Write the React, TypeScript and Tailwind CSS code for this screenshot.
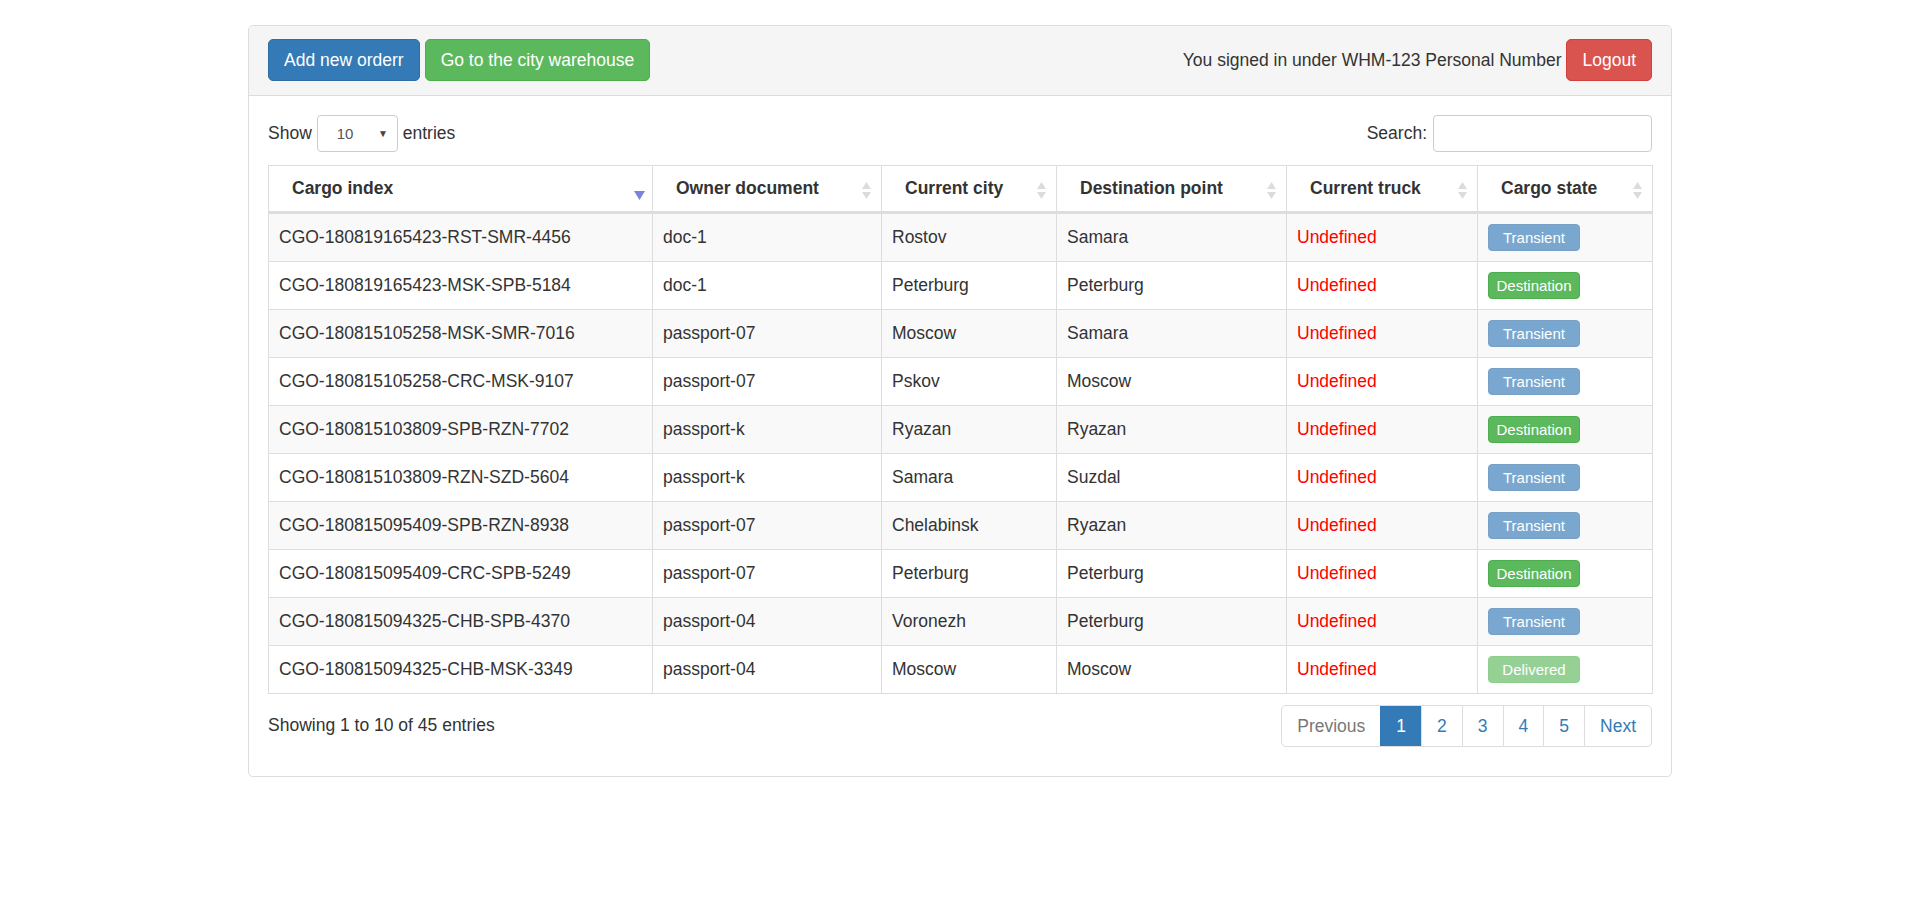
import React from "react";

type CargoState = "Transient" | "Destination" | "Delivered";

interface CargoRow {
  index: string;
  owner: string;
  city: string;
  destination: string;
  state: CargoState;
}

const rows: CargoRow[] = [
  { index: "CGO-180819165423-RST-SMR-4456", owner: "doc-1", city: "Rostov", destination: "Samara", state: "Transient" },
  { index: "CGO-180819165423-MSK-SPB-5184", owner: "doc-1", city: "Peterburg", destination: "Peterburg", state: "Destination" },
  { index: "CGO-180815105258-MSK-SMR-7016", owner: "passport-07", city: "Moscow", destination: "Samara", state: "Transient" },
  { index: "CGO-180815105258-CRC-MSK-9107", owner: "passport-07", city: "Pskov", destination: "Moscow", state: "Transient" },
  { index: "CGO-180815103809-SPB-RZN-7702", owner: "passport-k", city: "Ryazan", destination: "Ryazan", state: "Destination" },
  { index: "CGO-180815103809-RZN-SZD-5604", owner: "passport-k", city: "Samara", destination: "Suzdal", state: "Transient" },
  { index: "CGO-180815095409-SPB-RZN-8938", owner: "passport-07", city: "Chelabinsk", destination: "Ryazan", state: "Transient" },
  { index: "CGO-180815095409-CRC-SPB-5249", owner: "passport-07", city: "Peterburg", destination: "Peterburg", state: "Destination" },
  { index: "CGO-180815094325-CHB-SPB-4370", owner: "passport-04", city: "Voronezh", destination: "Peterburg", state: "Transient" },
  { index: "CGO-180815094325-CHB-MSK-3349", owner: "passport-04", city: "Moscow", destination: "Moscow", state: "Delivered" },
];

const columns = [
  { label: "Cargo index", width: "w-[384px]", sorted: true },
  { label: "Owner document", width: "w-[229px]", sorted: false },
  { label: "Current city", width: "w-[175px]", sorted: false },
  { label: "Destination point", width: "w-[230px]", sorted: false },
  { label: "Current truck", width: "w-[191px]", sorted: false },
  { label: "Cargo state", width: "w-[175px]", sorted: false },
];

const stateClass: Record<CargoState, string> = {
  Transient: "bg-[#7aa7d0] border-[#77a0c4]",
  Destination: "bg-[#5cb85c] border-[#4cae4c]",
  Delivered: "bg-[#95d195] border-[#8ecd8e]",
};

function SortBoth() {
  return (
    <svg width="9" height="19" viewBox="0 0 9 19" className="absolute right-[10px] top-[15px]">
      <polygon points="0,8 4.5,1 9,8" fill="#dcdcdc" />
      <polygon points="0,11 4.5,18 9,11" fill="#dcdcdc" />
    </svg>
  );
}

function SortDesc() {
  return (
    <svg width="11" height="9" viewBox="0 0 11 9" className="absolute right-[7px] top-[25px]">
      <polygon points="0,0 11,0 5.5,9" fill="#7b83da" />
    </svg>
  );
}

export default function App() {
  return (
    <div className="min-h-screen bg-white pt-[25px] text-[17.5px] leading-[25px] text-[#333]" style={{ fontFamily: '"Liberation Sans", Arial, sans-serif' }}>
      <div className="mx-auto w-[1424px] rounded-[5px] border border-[#ddd]">
        {/* heading */}
        <div className="flex items-center justify-between rounded-t-[5px] border-b border-[#ddd] bg-[#f5f5f5] px-[19px] pt-[13px] pb-[14px]">
          <div className="flex gap-[5px]">
            <button className="h-[42px] rounded-[5px] border border-[#2e6da4] bg-[#337ab7] px-[15px] text-white">Add new orderr</button>
            <button className="h-[42px] rounded-[5px] border border-[#4cae4c] bg-[#5cb85c] px-[15px] text-white">Go to the city warehouse</button>
          </div>
          <div className="flex items-center gap-[5px]">
            <span>You signed in under WHM-123 Personal Number</span>
            <button className="h-[42px] rounded-[5px] border border-[#d43f3a] bg-[#d9534f] px-[15px] text-white">Logout</button>
          </div>
        </div>

        {/* body */}
        <div className="px-[19px] pt-[19px] pb-[29px]">
          <div className="flex items-center justify-between">
            <div className="flex items-center gap-[5px]">
              <span>Show</span>
              <div className="flex h-[37px] w-[81px] items-center justify-between rounded-[4px] border border-[#ccc] bg-white pl-[19px] pr-[9px] text-[15px] text-[#555]">
                <span>10</span>
                <span className="text-[10px] text-[#444]">▼</span>
              </div>
              <span>entries</span>
            </div>
            <div className="flex items-center gap-[6px]">
              <span>Search:</span>
              <div className="h-[37px] w-[219px] rounded-[4px] border border-[#ccc] bg-white" />
            </div>
          </div>

          <table className="mt-[13px] w-full table-fixed border-collapse border border-[#ddd]">
            <thead>
              <tr>
                {columns.map((c) => (
                  <th
                    key={c.label}
                    className={`relative ${c.width} border border-b-[3px] border-[#ddd] py-[10px] pl-[23px] pr-[30px] text-left font-bold`}
                  >
                    {c.label}
                    {c.sorted ? <SortDesc /> : <SortBoth />}
                  </th>
                ))}
              </tr>
            </thead>
            <tbody>
              {rows.map((r, i) => (
                <tr key={r.index} className={i % 2 === 0 ? "bg-[#f9f9f9]" : "bg-white"}>
                  <td className="border border-[#ddd] px-[10px] py-[10px]">{r.index}</td>
                  <td className="border border-[#ddd] px-[10px] py-[10px]">{r.owner}</td>
                  <td className="border border-[#ddd] px-[10px] py-[10px]">{r.city}</td>
                  <td className="border border-[#ddd] px-[10px] py-[10px]">{r.destination}</td>
                  <td className="border border-[#ddd] px-[10px] py-[10px] text-[#ff0000]">Undefined</td>
                  <td className="border border-[#ddd] px-[10px] py-[10px]">
                    <div className={`flex h-[27px] w-[92px] items-center justify-center rounded-[4px] border text-[15px] text-white ${stateClass[r.state]}`}>
                      {r.state}
                    </div>
                  </td>
                </tr>
              ))}
            </tbody>
          </table>

          <div className="mt-[11px] flex items-start justify-between">
            <div className="pt-[8px]">Showing 1 to 10 of 45 entries</div>
            <div className="flex h-[42px] overflow-hidden rounded-[5px] border border-[#ddd]">
              <span className="flex items-center px-[15px] text-[#777]">Previous</span>
              <span className="flex items-center border-l border-[#337ab7] bg-[#337ab7] px-[15px] text-white">1</span>
              <span className="flex items-center border-l border-[#ddd] px-[15px] text-[#337ab7]">2</span>
              <span className="flex items-center border-l border-[#ddd] px-[15px] text-[#337ab7]">3</span>
              <span className="flex items-center border-l border-[#ddd] px-[15px] text-[#337ab7]">4</span>
              <span className="flex items-center border-l border-[#ddd] px-[15px] text-[#337ab7]">5</span>
              <span className="flex items-center border-l border-[#ddd] px-[15px] text-[#337ab7]">Next</span>
            </div>
          </div>
        </div>
      </div>
    </div>
  );
}
